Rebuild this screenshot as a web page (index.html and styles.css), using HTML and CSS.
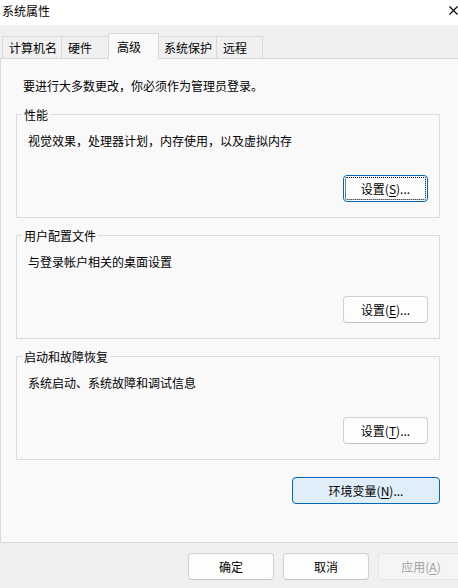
FILE: index.html
```html
<!DOCTYPE html>
<html lang="zh-CN">
<head>
    <meta charset="UTF-8">
    <title>系统属性</title>
    <link rel="stylesheet" href="styles.css">
</head>
<body>
    <div class="dialog">
        <div class="titlebar">
            <span class="title">系统属性</span>
            <svg class="close" width="9" height="9" viewBox="0 0 9 9">
                <path d="M0.5 0.5 L8.5 8.5 M8.5 0.5 L0.5 8.5" stroke="#000" stroke-width="1.1" fill="none"/>
            </svg>
        </div>

        <div class="tabs">
            <div class="tab">计算机名</div>
            <div class="tab">硬件</div>
            <div class="tab active">高级</div>
            <div class="tab">系统保护</div>
            <div class="tab">远程</div>
        </div>

        <div class="panel">
            <p class="note">要进行大多数更改，你必须作为管理员登录。</p>

            <div class="groups">
                <fieldset class="group">
                    <legend>性能</legend>
                    <p class="desc">视觉效果，处理器计划，内存使用，以及虚拟内存</p>
                    <div class="row-end">
                        <button class="btn focused">设置(<u>S</u>)...</button>
                    </div>
                </fieldset>

                <fieldset class="group">
                    <legend>用户配置文件</legend>
                    <p class="desc">与登录帐户相关的桌面设置</p>
                    <div class="row-end">
                        <button class="btn">设置(<u>E</u>)...</button>
                    </div>
                </fieldset>

                <fieldset class="group">
                    <legend>启动和故障恢复</legend>
                    <p class="desc">系统启动、系统故障和调试信息</p>
                    <div class="row-end">
                        <button class="btn">设置(<u>T</u>)...</button>
                    </div>
                </fieldset>

                <div class="row-end env-row">
                    <button class="btn btn-default">环境变量(<u>N</u>)...</button>
                </div>
            </div>
        </div>

        <div class="footer">
            <button class="btn">确定</button>
            <button class="btn">取消</button>
            <button class="btn" disabled>应用(<u>A</u>)</button>
        </div>
    </div>
</body>
</html>
```

FILE: styles.css
```css
* {
    box-sizing: border-box;
}

html, body {
    overflow: hidden;
}

body {
    margin: 0;
    width: 458px;
    height: 588px;
    background: #f0f0f0;
    color: #000;
    font-family: "Noto Sans CJK SC", "Noto Sans", sans-serif;
    font-size: 12px;
    line-height: 17px;
}

.dialog {
    width: 458px;
}

.titlebar {
    height: 25px;
    background: #fff;
    display: flex;
    justify-content: space-between;
    align-items: flex-start;
    padding: 2px 0 0 2px;
}

.close {
    margin-top: 4px;
}

/* tab strip */
.tabs {
    height: 33px;
    display: flex;
    align-items: flex-end;
    padding-left: 2px;
}

.tab {
    position: relative;
    height: 22px;
    min-width: 49px;
    padding: 2px 4px 0 6px;
    border: 1px solid #d9d9d9;
    border-bottom: none;
    margin-right: -1px;
    background: #f0f0f0;
}

.tab.active {
    height: 26px;
    min-width: 51px;
    margin: 0 -2px -1px -1px;
    padding-top: 4px;
    padding-left: 8px;
    background: #f9f9f9;
    z-index: 1;
}

.tab.active + .tab {
    padding-left: 6px;
}

.tab:last-child {
    min-width: 47px;
}

/* page */
.panel {
    height: 485px;
    background: #f9f9f9;
    border: 1px solid #d9d9d9;
    margin-right: -10px;
}

.note {
    margin: 18px 0 0 22px;
}

.groups {
    width: 424px;
    margin: 12px 0 0 15px;
}

.group {
    margin: 9px 0 0 0;
    padding: 9px 11px 15px 11px;
    border: 1px solid #dcdcdc;
    min-width: 0;
}

.group:first-child {
    margin-top: 0;
}

.group legend {
    margin-left: -6px;
    padding: 0 2px;
    line-height: 17px;
}

.desc {
    margin: 0;
}

.row-end {
    display: flex;
    justify-content: flex-end;
}

.group .row-end {
    margin-top: 26px;
}

.env-row {
    margin-top: 17px;
}

/* buttons */
.btn {
    height: 27px;
    width: 85px;
    padding: 0;
    font-family: inherit;
    font-size: 12px;
    color: #000;
    background: #fdfdfd;
    border: 1px solid #d0d0d0;
    border-bottom-color: #c2c2c2;
    border-radius: 4px;
}

.btn u {
    text-underline-offset: 2px;
}

.btn.focused {
    border: 1px solid #0067c0;
    outline: 1px dotted #000;
    outline-offset: -3px;
}

.btn-default {
    width: 148px;
    background: #e0eef9;
    border: 1px solid #0067c0;
}

.btn:disabled {
    color: #a0a0a0;
    background: #f5f5f5;
    border-color: #e5e5e5;
}

.footer {
    display: flex;
    justify-content: flex-end;
    gap: 9px;
    padding: 10px 0 0 0;
    margin-right: -6px;
}

.footer .btn {
    width: 86px;
}
```
